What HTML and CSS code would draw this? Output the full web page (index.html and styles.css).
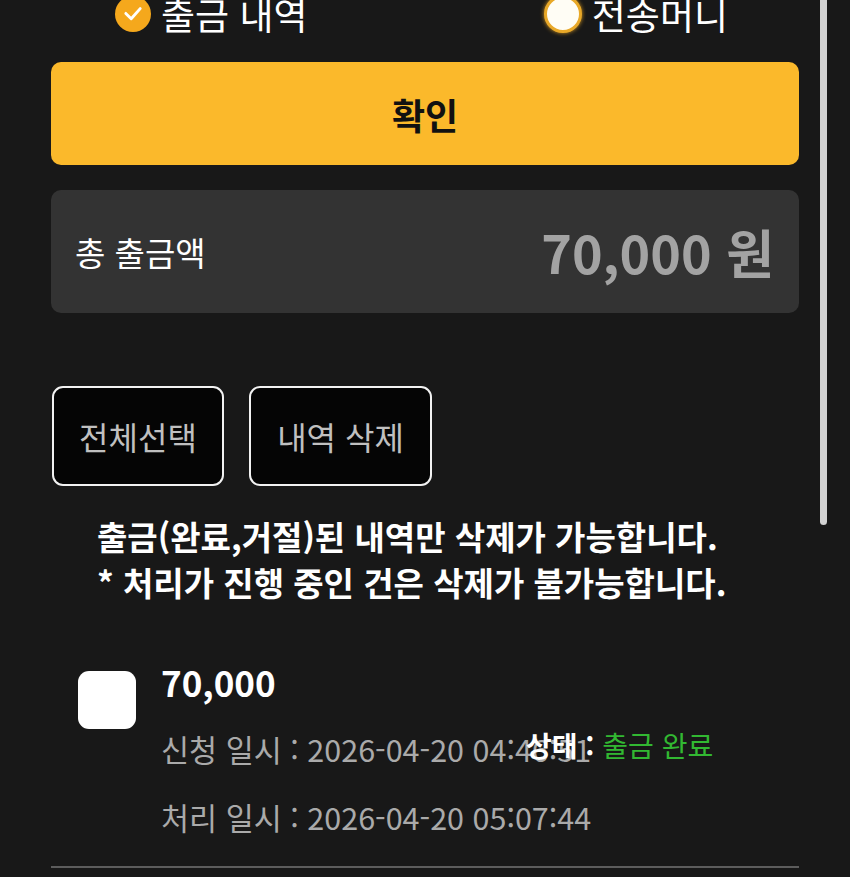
FILE: index.html
```html
<!DOCTYPE html>
<html lang="ko">
<head>
    <meta charset="UTF-8">
    <meta name="viewport" content="width=device-width, initial-scale=1.0">
    <title>출금 내역</title>
    <link rel="stylesheet" href="styles.css">
</head>
<body>
    <div class="page">
        <div class="radio-row">
            <label class="radio">
                <span class="radio-mark checked">
                    <svg width="24" height="24" viewBox="0 0 20 20"><path d="M4 9.5 L8.5 14 L16 5.5" fill="none" stroke="#fff" stroke-width="2.4" stroke-linecap="round" stroke-linejoin="round"/></svg>
                </span>
                <span class="radio-text">출금 내역</span>
            </label>
            <label class="radio">
                <span class="radio-mark"></span>
                <span class="radio-text">전송머니</span>
            </label>
        </div>

        <button class="confirm-btn">확인</button>

        <div class="total-box">
            <span class="total-label">총 출금액</span>
            <span class="total-value">70,000 원</span>
        </div>

        <div class="action-row">
            <button class="outline-btn select-all">전체선택</button>
            <button class="outline-btn delete-btn">내역 삭제</button>
        </div>

        <div class="notice">
            <p>출금(완료,거절)된 내역만 삭제가 가능합니다.</p>
            <p>* 처리가 진행 중인 건은 삭제가 불가능합니다.</p>
        </div>

        <div class="history-item">
            <span class="check-box"></span>
            <div class="item-info">
                <div class="item-amount">70,000</div>
                <div class="item-date">신청 일시 : 2026-04-20 04:46:51</div>
                <div class="item-date">처리 일시 : 2026-04-20 05:07:44</div>
            </div>
            <div class="item-status"><b>상태 :</b> <span class="status-done">출금 완료</span></div>
        </div>
        <div class="divider"></div>
    </div>

    <div class="scrollbar"></div>
</body>
</html>
```

FILE: styles.css
```css
body {
    margin: 0;
    background-color: #181818;
    font-family: "Noto Sans CJK KR", "Noto Sans", sans-serif;
    color: #fff;
    overflow: hidden;
    height: 877px;
}

.page {
    padding: 0 51px;
}

.radio-row {
    display: flex;
    justify-content: space-between;
    align-items: center;
    height: 40px;
    margin-top: -6px;
    padding: 0 71px 0 64px;
}

.radio {
    display: flex;
    align-items: center;
    gap: 12px;
}

.radio-mark {
    width: 38px;
    height: 38px;
    border-radius: 50%;
    background: #fffdf5;
    box-sizing: border-box;
    border: 3px solid #e8a828;
    box-shadow: 0 0 4px #d89a20;
    display: flex;
    align-items: center;
    justify-content: center;
}

.radio-mark.checked {
    width: 36px;
    height: 36px;
    background: #f5a81c;
    border: none;
    box-shadow: none;
}

.radio-text {
    font-size: 37px;
    line-height: 40px;
    margin-left: -2px;
}

.confirm-btn {
    display: block;
    width: 100%;
    height: 103px;
    margin-top: 28px;
    border: none;
    border-radius: 10px;
    background-color: #fbb92b;
    color: #111;
    font-family: inherit;
    font-size: 36px;
    font-weight: bold;
}

.total-box {
    margin-top: 25px;
    height: 123px;
    border-radius: 10px;
    background-color: #333;
    display: flex;
    align-items: center;
    justify-content: space-between;
    padding: 0 25px 0 24px;
}

.total-label {
    font-size: 33px;
}

.total-value {
    font-size: 52px;
    font-weight: bold;
    color: #a3a3a3;
}

.action-row {
    display: flex;
    gap: 25px;
    margin-top: 73px;
    padding-left: 1px;
}

.outline-btn {
    height: 100px;
    border: 2px solid #f2f2f2;
    border-radius: 11px;
    background-color: #050505;
    color: #c0c0c0;
    font-family: inherit;
    font-size: 32px;
}

.select-all {
    width: 172px;
}

.delete-btn {
    width: 183px;
}

.notice {
    margin-top: 27px;
    padding-left: 46px;
    font-size: 33px;
    font-weight: bold;
}

.notice p {
    margin: 0;
    line-height: 46px;
}

.history-item {
    position: relative;
    display: flex;
    gap: 25px;
    margin-top: 52px;
    padding-left: 27px;
    padding-bottom: 15px;
}

.check-box {
    width: 58px;
    height: 58px;
    border-radius: 11px;
    background: #fff;
    margin-top: 14px;
    flex-shrink: 0;
}

.item-amount {
    font-size: 35px;
    font-weight: bold;
    line-height: 50px;
    margin-bottom: 8px;
}

.item-date {
    font-size: 30.5px;
    color: #aaa;
    line-height: 68px;
}

.item-status {
    position: absolute;
    left: 475px;
    top: 66px;
    font-size: 28px;
    line-height: 44px;
}

.status-done {
    color: #32b832;
}

.divider {
    height: 2px;
    background-color: #5c5c5c;
}

.scrollbar {
    position: fixed;
    top: 0;
    left: 820px;
    width: 7px;
    height: 525px;
    border-radius: 0 0 4px 4px;
    background-color: #d2d2d2;
}
```
